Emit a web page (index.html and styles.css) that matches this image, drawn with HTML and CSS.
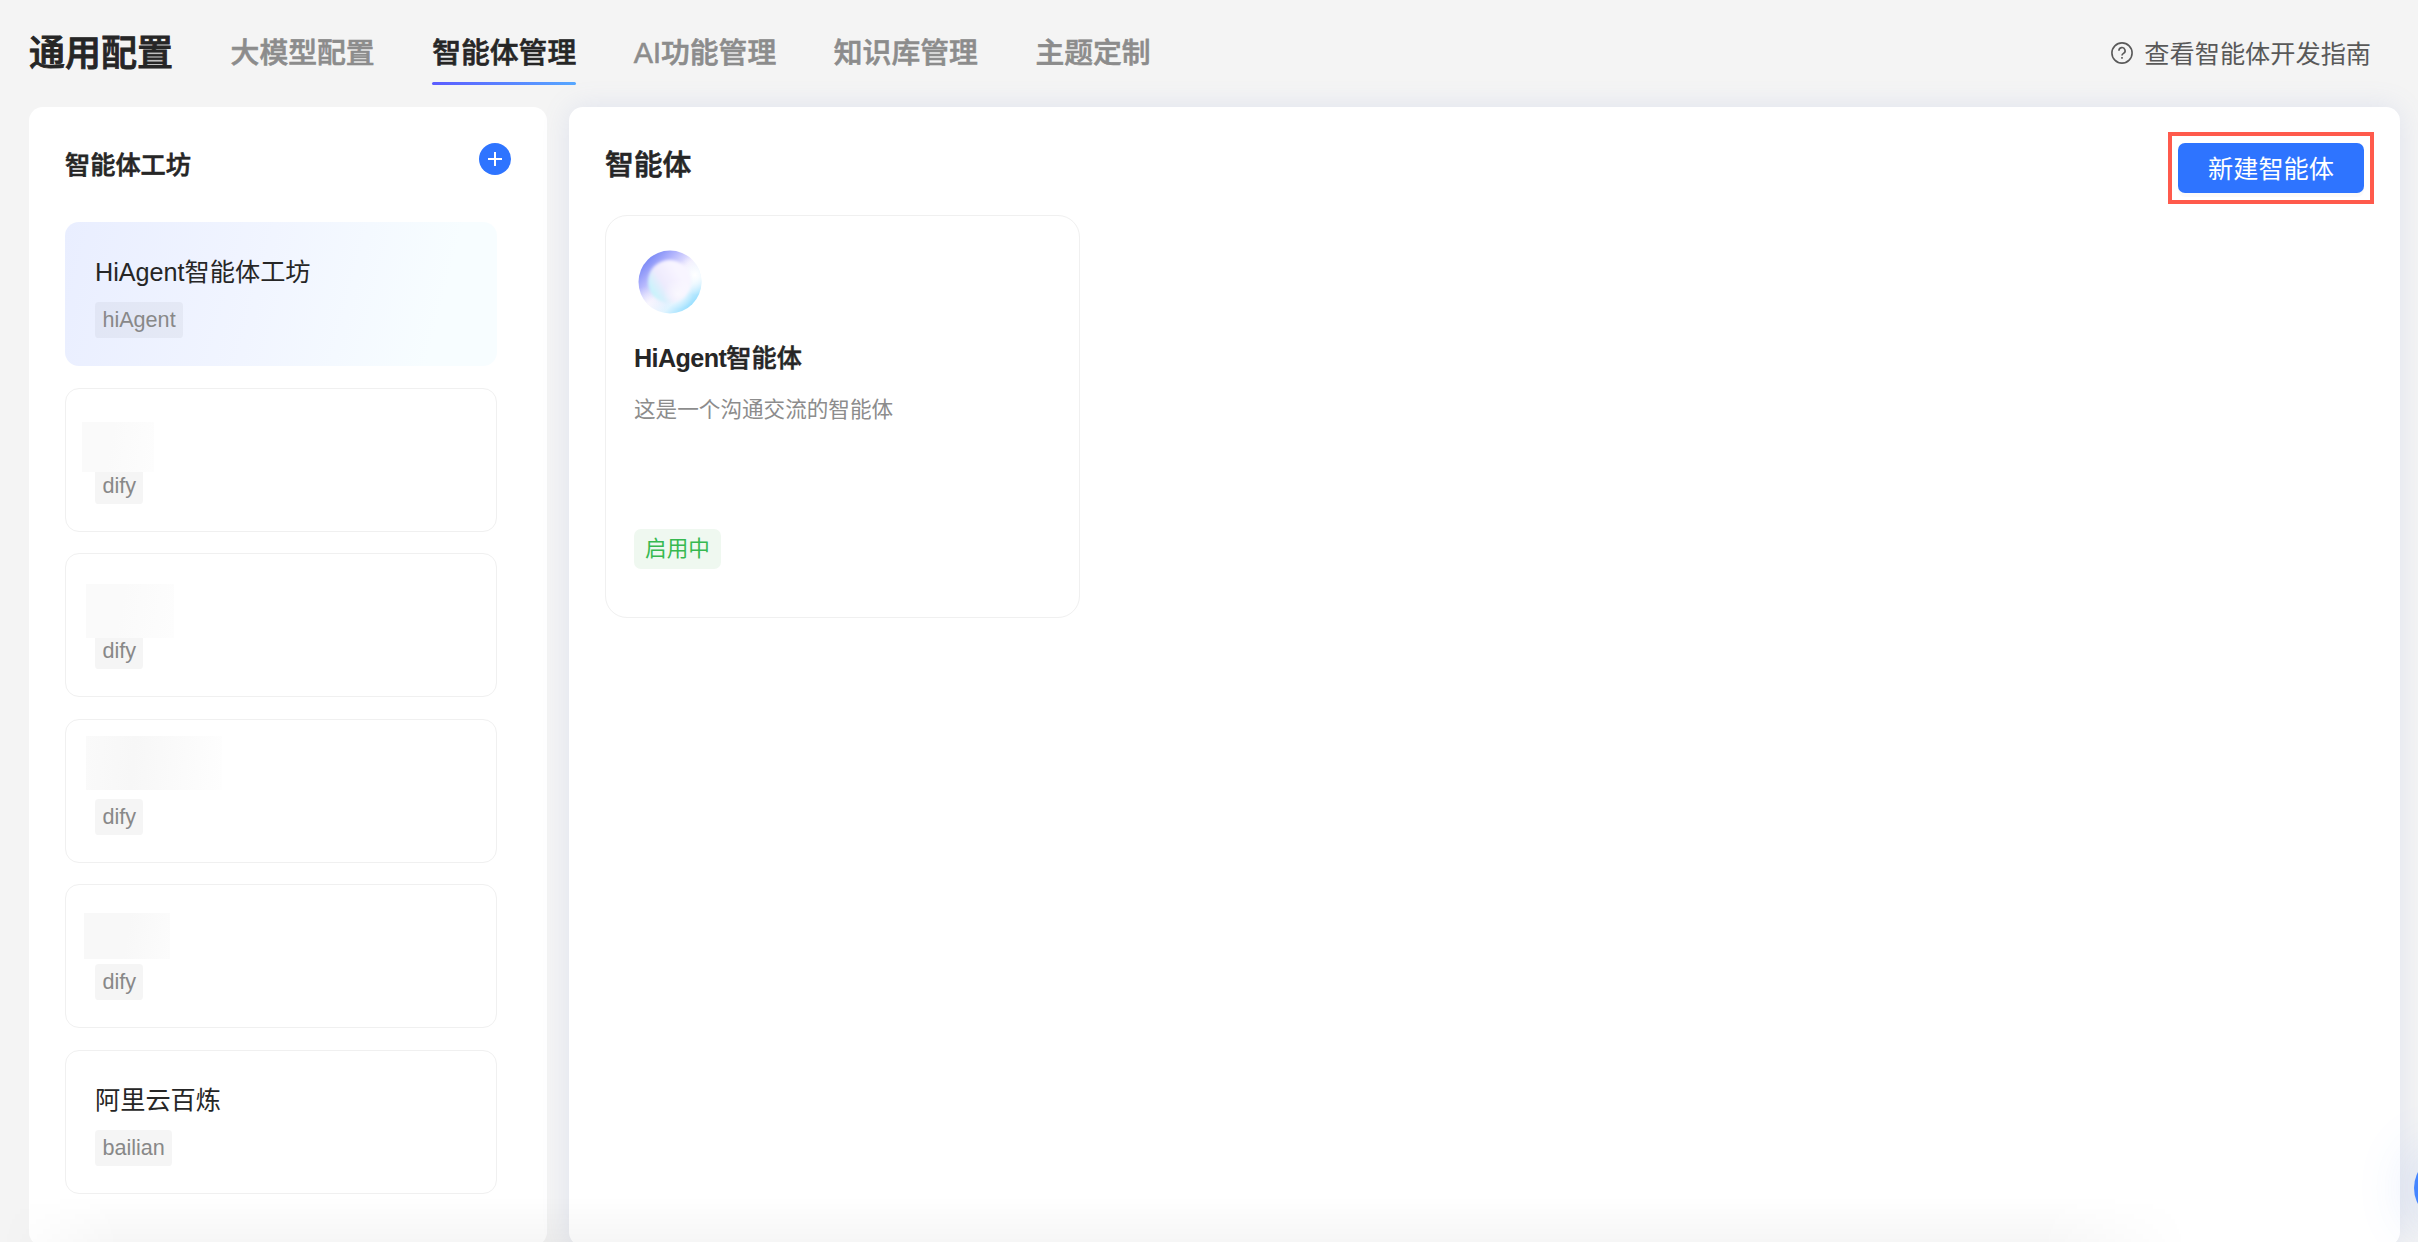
FILE: index.html
```
<!DOCTYPE html>
<html lang="zh-CN">
<head>
    <meta charset="UTF-8">
    <meta name="viewport" content="width=device-width, initial-scale=1.0">
    <title>通用配置</title>
    <link rel="stylesheet" href="styles.css">
</head>
<body>

    <!-- Header -->
    <header class="header">
        <h1 class="page-title">通用配置</h1>
        <nav class="tabs">
            <a class="tab">大模型配置</a>
            <a class="tab active">智能体管理</a>
            <a class="tab">AI功能管理</a>
            <a class="tab">知识库管理</a>
            <a class="tab">主题定制</a>
        </nav>
        <a class="guide">
            <svg width="22" height="22" viewBox="0 0 22 22" fill="none" stroke="#595959" stroke-width="1.6">
                <circle cx="11" cy="11" r="10.1"/>
                <path d="M7.9 8.7a3.1 3.1 0 1 1 4.6 2.7c-1 .6-1.5 1-1.5 2.1"/>
                <path d="M11 15v1.8"/>
            </svg>
            <span>查看智能体开发指南</span>
        </a>
    </header>

    <div class="container">
        <!-- Workshop list -->
        <aside class="sidebar">
            <div class="sidebar-head">
                <h2>智能体工坊</h2>
                <button class="add-btn">
                    <svg width="32" height="32" viewBox="0 0 32 32" stroke="#fff" stroke-width="2">
                        <path d="M16 9v14M9 16h14"/>
                    </svg>
                </button>
            </div>
            <div class="workshop-list">
                <div class="workshop selected">
                    <div class="workshop-name">HiAgent智能体工坊</div>
                    <span class="tag">hiAgent</span>
                </div>
                <div class="workshop">
                    <div class="workshop-name"></div>
                    <span class="tag">dify</span>
                    <div class="mask mask-1"></div>
                </div>
                <div class="workshop">
                    <div class="workshop-name"></div>
                    <span class="tag">dify</span>
                    <div class="mask mask-2"></div>
                </div>
                <div class="workshop">
                    <div class="workshop-name"></div>
                    <span class="tag">dify</span>
                    <div class="mask mask-3"></div>
                </div>
                <div class="workshop">
                    <div class="workshop-name"></div>
                    <span class="tag">dify</span>
                    <div class="mask mask-4"></div>
                </div>
                <div class="workshop">
                    <div class="workshop-name">阿里云百炼</div>
                    <span class="tag">bailian</span>
                </div>
            </div>
        </aside>

        <!-- Agents -->
        <main class="main">
            <div class="main-head">
                <h2>智能体</h2>
                <div class="highlight">
                    <button class="create-btn">新建智能体</button>
                </div>
            </div>
            <div class="agent-card">
                <svg class="orb" width="64" height="64" viewBox="0 0 64 64">
                    <defs>
                        <linearGradient id="orbBase" x1="0.1" y1="0.15" x2="0.85" y2="0.9">
                            <stop offset="0" stop-color="#7585f5"/>
                            <stop offset="0.25" stop-color="#b3b5fd"/>
                            <stop offset="0.5" stop-color="#eeeafd"/>
                            <stop offset="0.75" stop-color="#e0f4ff"/>
                            <stop offset="1" stop-color="#8edcff"/>
                        </linearGradient>
                        <linearGradient id="orbCore" x1="0" y1="0.75" x2="0.7" y2="0.3">
                            <stop offset="0" stop-color="#bdf6fb"/>
                            <stop offset="0.5" stop-color="#eeeafd"/>
                            <stop offset="1" stop-color="#f8f5ff"/>
                        </linearGradient>
                        <radialGradient id="orbShine">
                            <stop offset="0" stop-color="#fff"/>
                            <stop offset="1" stop-color="#fff" stop-opacity="0"/>
                        </radialGradient>
                        <clipPath id="orbClip"><circle cx="32" cy="32" r="31.5"/></clipPath>
                        <filter id="soft"><feGaussianBlur stdDeviation="1.5"/></filter>
                    </defs>
                    <g clip-path="url(#orbClip)">
                        <rect width="64" height="64" fill="url(#orbBase)"/>
                        <circle cx="57" cy="25" r="20" fill="url(#orbShine)"/>
                        <circle cx="10" cy="54" r="18" fill="url(#orbShine)" opacity="0.6"/>
                        <circle cx="31.5" cy="31.5" r="21.5" fill="url(#orbCore)" filter="url(#soft)"/>
                        <circle cx="40" cy="44" r="15" fill="url(#orbShine)" opacity="0.6"/>
                    </g>
                </svg>
                <h3><span class="latin">HiAgent</span>智能体</h3>
                <p>这是一个沟通交流的智能体</p>
                <span class="status">启用中</span>
            </div>
        </main>
    </div>

    <div class="bottom-fade"></div>
    <div class="float-btn"></div>

</body>
</html>
```
FILE: styles.css
```
* {
    box-sizing: border-box;
}
body {
    margin: 0;
    height: 1242px;
    overflow: hidden;
    position: relative;
    background-color: #f4f4f4;
    color: #262626;
    font-family: "Liberation Sans", "Noto Sans CJK SC", sans-serif;
}
h1, h2, h3, p {
    margin: 0;
    font-weight: 500;
}
h1, h2, .tab {
    -webkit-text-stroke: 0.6px currentColor;
}
button {
    border: none;
    padding: 0;
    font-family: inherit;
}

/* header */
.header {
    display: flex;
    align-items: flex-start;
    height: 107px;
    padding: 20px 47px 0 29px;
}
.page-title {
    font-size: 36px;
    line-height: 68px;
    width: 144px;
    -webkit-text-stroke-width: 0.9px;
}
.tabs {
    display: flex;
    gap: 57.6px;
    margin-left: 57.6px;
}
.tab {
    height: 65px;
    line-height: 66px;
    font-size: 28.8px;
    font-weight: 500;
    color: #8c8c8c;
    white-space: nowrap;
}
.tab.active {
    position: relative;
    color: #262626;
}
.tab.active::after {
    content: "";
    position: absolute;
    left: 0;
    right: 0;
    bottom: 0;
    height: 3px;
    border-radius: 2px;
    background: linear-gradient(90deg, #5b5cff, #57a8ff);
}
.guide {
    display: flex;
    align-items: center;
    gap: 11px;
    height: 66px;
    margin-left: auto;
    font-size: 25.2px;
    color: #595959;
}
.guide span {
    padding-bottom: 2px;
}

/* panels */
.container {
    display: flex;
    gap: 22px;
    height: 1139px;
    padding: 0 18px 0 29px;
}
.sidebar,
.main {
    background-color: #fff;
    border-radius: 14px;
}
.sidebar {
    width: 518px;
    padding: 36px;
}
.main {
    flex: 1;
    padding: 25px 26px 0 36px;
    box-shadow: 0 0 28px rgba(110, 135, 205, 0.15);
}
.sidebar-head {
    display: flex;
    justify-content: space-between;
    height: 79px;
}
.sidebar-head h2 {
    font-size: 25.2px;
    line-height: 44px;
}
.add-btn {
    width: 32px;
    height: 32px;
    border-radius: 50%;
    background-color: #2e74ff;
}
.add-btn svg {
    display: block;
}

/* workshop cards */
.workshop-list {
    display: flex;
    flex-direction: column;
    gap: 21.6px;
    width: 432px;
}
.workshop {
    position: relative;
    height: 144px;
    padding: 29px;
    border: 1px solid #f0f0f0;
    border-radius: 14px;
}
.workshop.selected {
    border-color: transparent;
    background: linear-gradient(105deg, #e9eeff 0%, #f1f5ff 45%, #f7fdff 85%) border-box;
}
.workshop-name {
    height: 40px;
    margin-bottom: 10px;
    font-size: 25.2px;
    line-height: 40px;
}
.tag {
    display: block;
    width: fit-content;
    height: 36px;
    padding: 0 7.4px;
    border-radius: 3.6px;
    background-color: rgba(0, 0, 0, 0.04);
    color: #888;
    font-size: 21.6px;
    line-height: 36px;
}

/* hidden names */
.mask {
    position: absolute;
    background: linear-gradient(100deg, #fafafa 40%, #fdfdfd);
}
.mask-1 {
    left: 16px;
    top: 33px;
    width: 72px;
    height: 50px;
}
.mask-2 {
    left: 20px;
    top: 30px;
    width: 88px;
    height: 54px;
}
.mask-3 {
    left: 20px;
    top: 16px;
    width: 136px;
    height: 54px;
    background: linear-gradient(95deg, #fafafa, #f7f7f7 35%, #fefefe);
}
.mask-4 {
    left: 18px;
    top: 28px;
    width: 86px;
    height: 46px;
    background: linear-gradient(100deg, #f8f8f8 50%, #fcfcfc);
}

/* agents */
.main-head {
    display: flex;
    justify-content: space-between;
    height: 83px;
}
.main-head h2 {
    font-size: 28.8px;
    line-height: 66px;
}
.highlight {
    width: 206px;
    height: 72px;
    padding: 7px 6px;
    border: 4px solid #ff5a4c;
}
.create-btn {
    display: block;
    width: 186px;
    height: 50px;
    border-radius: 7px;
    background-color: #2e74ff;
    box-shadow: 0 4px 0 rgba(0, 0, 0, 0.02);
    color: #fff;
    font-size: 25.2px;
    line-height: 52px;
}
.agent-card {
    width: 475px;
    height: 403px;
    padding: 34px 28px;
    border: 1px solid #f0f0f0;
    border-radius: 22px;
}
.orb {
    display: block;
    margin-left: 4px;
}
.agent-card h3 {
    margin-top: 24px;
    font-size: 25.2px;
    line-height: 40px;
    -webkit-text-stroke: 0.5px currentColor;
}
.latin {
    font-weight: 700;
    letter-spacing: -0.6px;
    -webkit-text-stroke: 0;
}
.agent-card p {
    margin-top: 14px;
    height: 36px;
    font-size: 21.6px;
    font-weight: 400;
    line-height: 36px;
    color: #8c8c8c;
}
.status {
    display: block;
    width: 87px;
    height: 40px;
    margin-top: 101px;
    border-radius: 7px;
    background-color: #eff8f0;
    color: #37b950;
    font-size: 21.6px;
    line-height: 40px;
    text-align: center;
}

/* bottom overlay */
.bottom-fade {
    position: absolute;
    left: 0;
    right: 0;
    bottom: 0;
    height: 46px;
    background: linear-gradient(rgba(0, 0, 0, 0), rgba(0, 0, 0, 0.035));
    mask-image: linear-gradient(90deg, transparent, #000 120px, #000 2040px, transparent 2190px);
}
.float-btn {
    position: absolute;
    left: 2414px;
    top: 1154px;
    width: 68px;
    height: 68px;
    border-radius: 50%;
    background-color: #4585ff;
    box-shadow: 0 0 58px rgba(70, 125, 240, 0.22);
}
```
